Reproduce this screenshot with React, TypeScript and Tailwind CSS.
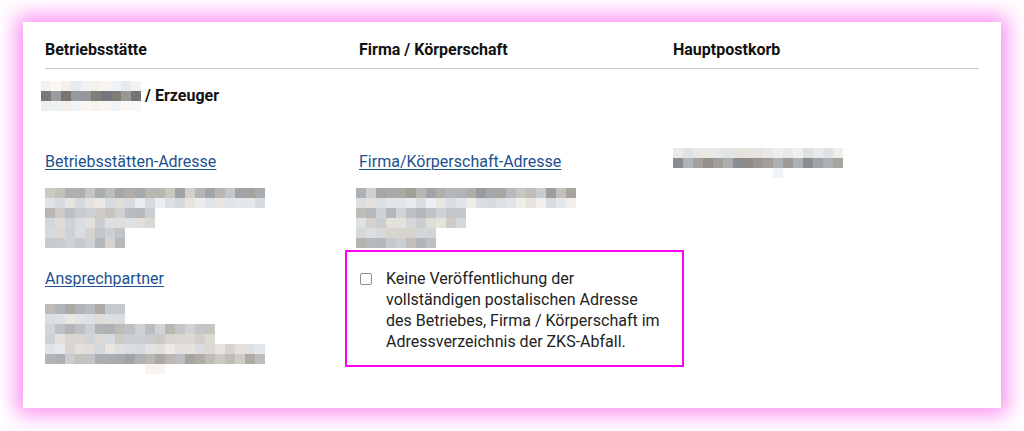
import React from "react";

type Row = { n: number; base: number; spread: number; offset?: number };

// simple seeded noise so the blur blocks look the same on every render
const noise = (seed: number) => {
  const x = Math.sin(seed * 12.9898) * 43758.5453;
  return x - Math.floor(x);
};

const Mosaic = ({ rows, seed, className }: { rows: Row[]; seed: number; className?: string }) => (
  <div className={"flex flex-col " + (className ?? "")}>
    {rows.map((row, r) => (
      <div key={r} className="flex h-[10px]">
        {Array.from({ length: row.offset ?? 0 }).map((_, i) => (
          <div key={"o" + i} className="w-[10px] h-[10px]" />
        ))}
        {Array.from({ length: row.n }).map((_, i) => {
          const v = Math.round(row.base + (noise(seed + r * 31 + i * 7) - 0.5) * row.spread);
          const c = Math.max(0, Math.min(255, v));
          const tint = noise(seed + r * 13 + i * 3) > 0.5 ? 4 : -3;
          return (
            <div
              key={i}
              className="w-[10px] h-[10px]"
              style={{ backgroundColor: `rgb(${c + tint},${c},${c - tint})` }}
            />
          );
        })}
      </div>
    ))}
  </div>
);

const Header = ({ children }: { children: React.ReactNode }) => (
  <div className="text-[16px] leading-5 font-bold text-[#111]">{children}</div>
);

const Link = ({ children }: { children: React.ReactNode }) => (
  <a
    href="#"
    className="block w-fit text-[16px] leading-5 text-[#1d4f8f] underline underline-offset-2 decoration-1"
  >
    {children}
  </a>
);

export default function App() {
  return (
    <div
      className="bg-white w-[1024px] h-[431px] pt-[22px] px-[23px]"
      style={{ fontFamily: "Roboto, 'Liberation Sans', sans-serif" }}
    >
      <div className="bg-white h-[386px] pt-[18px] px-[22px] shadow-[0_0_20px_6px_rgba(245,60,230,0.6)]">
        {/* Kopfzeile */}
        <div className="grid grid-cols-[314px_314px_314px] pb-[8px] border-b border-[#c9c9c9]">
          <Header>Betriebsstätte</Header>
          <Header>Firma / Körperschaft</Header>
          <Header>Hauptpostkorb</Header>
        </div>

        {/* Erzeuger */}
        <div className="flex items-center mt-[12px] -ml-[4px]">
          <Mosaic
            seed={3}
            rows={[
              { n: 10, base: 240, spread: 14 },
              { n: 10, base: 135, spread: 50 },
              { n: 10, base: 244, spread: 10 },
            ]}
          />
          <span className="ml-[4px] text-[16px] leading-5 font-bold text-[#111]">/ Erzeuger</span>
        </div>

        {/* Spalten */}
        <div className="grid grid-cols-[314px_314px_314px] mt-[41px]">
          <div className="flex flex-col">
            <Link>Betriebsstätten-Adresse</Link>
            <Mosaic
              seed={11}
              className="mt-[16px]"
              rows={[
                { n: 22, base: 185, spread: 50 },
                { n: 22, base: 228, spread: 22 },
                { n: 11, base: 196, spread: 30 },
                { n: 11, base: 215, spread: 28 },
                { n: 8, base: 210, spread: 26 },
                { n: 8, base: 195, spread: 34 },
              ]}
            />
            <div className="mt-[21px]">
              <Link>Ansprechpartner</Link>
            </div>
            <Mosaic
              seed={47}
              className="mt-[15px]"
              rows={[
                { n: 8, base: 185, spread: 40 },
                { n: 8, base: 228, spread: 20 },
                { n: 17, base: 196, spread: 38 },
                { n: 17, base: 212, spread: 30 },
                { n: 22, base: 222, spread: 24 },
                { n: 22, base: 180, spread: 50 },
                { n: 2, base: 244, spread: 6, offset: 10 },
              ]}
            />
          </div>

          <div className="flex flex-col">
            <Link>Firma/Körperschaft-Adresse</Link>
            <Mosaic
              seed={29}
              className="mt-[16px] -ml-[3px]"
              rows={[
                { n: 22, base: 182, spread: 55 },
                { n: 22, base: 230, spread: 20 },
                { n: 11, base: 198, spread: 30 },
                { n: 11, base: 214, spread: 26 },
                { n: 8, base: 212, spread: 26 },
                { n: 8, base: 196, spread: 34 },
              ]}
            />
            <div className="mt-[2px] -ml-[14px] w-[339px] border-2 border-[#ff00f0] pt-[16px] pb-[13px] pl-[13px] flex gap-[14px]">
              <div className="mt-[5px] shrink-0 w-[12px] h-[12px] rounded-[2px] border border-[#8f8f8f] bg-white" />
              <p className="whitespace-nowrap text-[16px] leading-[21px] text-[#222]">
                Keine Veröffentlichung der
                <br />
                vollständigen postalischen Adresse
                <br />
                des Betriebes, Firma / Körperschaft im
                <br />
                Adressverzeichnis der ZKS-Abfall.
              </p>
            </div>
          </div>

          <div className="flex flex-col">
            <Mosaic
              seed={71}
              className="-ml-[10px] -mt-[4px]"
              rows={[
                { n: 17, base: 232, spread: 16, offset: 1 },
                { n: 17, base: 160, spread: 44, offset: 1 },
                { n: 1, base: 246, spread: 4, offset: 11 },
              ]}
            />
          </div>
        </div>
      </div>
    </div>
  );
}
